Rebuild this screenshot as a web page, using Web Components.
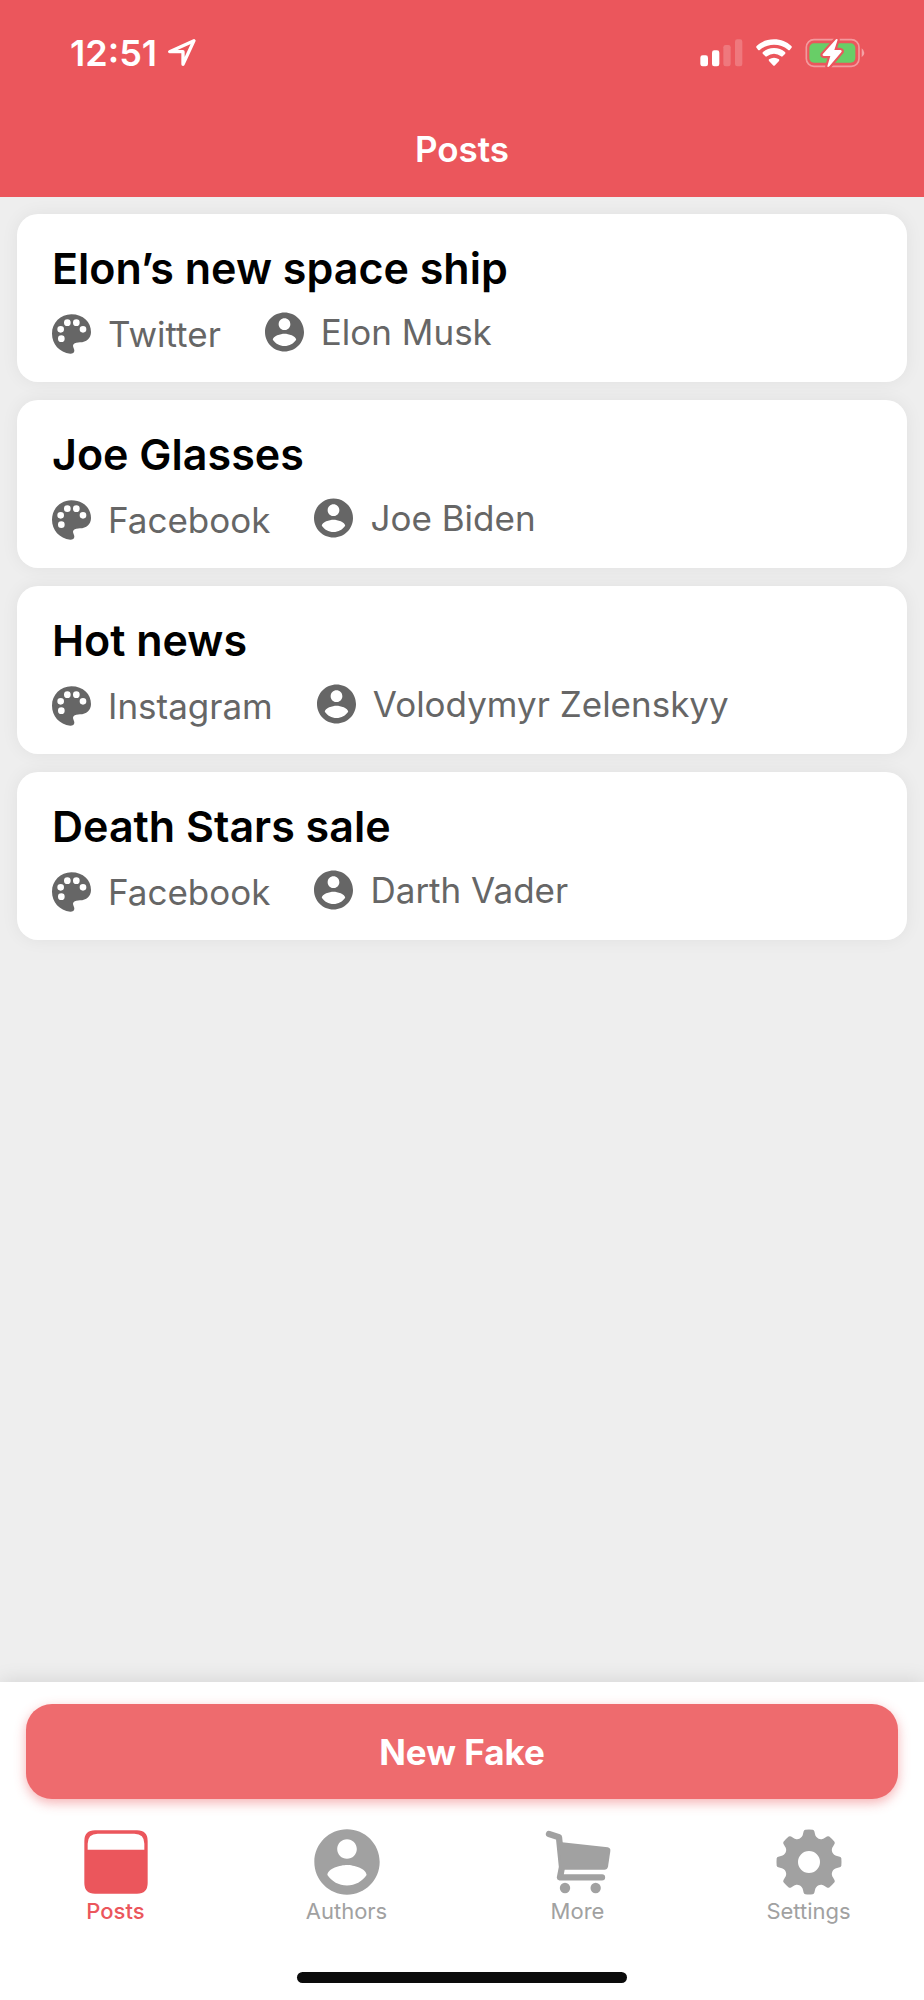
<!DOCTYPE html>
<html lang="en">
<head>
<meta charset="utf-8">
<meta name="viewport" content="width=device-width, initial-scale=1">
<title>Posts</title>
<style>
  body {
    margin: 0;
    font-family: Inter, "Liberation Sans", sans-serif;
    background: #eee;
    --accent: #eb565c;
    --accent-soft: #ee6b6e;
    --muted: #666;
    --idle: #a1a1a1;
  }
</style>
</head>
<body>
<fake-app>
  <status-bar slot="header" time="12:51"></status-bar>
  <nav-title slot="header">Posts</nav-title>
  <post-card network="Twitter" author="Elon Musk">Elon’s new space ship</post-card>
  <post-card network="Facebook" author="Joe Biden">Joe Glasses</post-card>
  <post-card network="Instagram" author="Volodymyr Zelenskyy">Hot news</post-card>
  <post-card network="Facebook" author="Darth Vader">Death Stars sale</post-card>
  <action-button slot="footer">New Fake</action-button>
  <tab-bar slot="footer">
    <tab-item icon="posts" href="#posts" active>Posts</tab-item>
    <tab-item icon="person" href="#authors">Authors</tab-item>
    <tab-item icon="cart" href="#more">More</tab-item>
    <tab-item icon="gear" href="#settings">Settings</tab-item>
  </tab-bar>
</fake-app>

<script>
// One tooth and the valley after it, repeated every 45 degrees around the hub.
function gearPath() {
  const at = (x, y, k) => {
    const a = k * Math.PI / 4, c = Math.cos(a), s = Math.sin(a);
    return (99 + x * c - y * s).toFixed(1) + ' ' + (99 + x * s + y * c).toFixed(1);
  };
  let d = '';
  for (let k = 0; k < 8; k++) {
    d += (k ? 'L' : 'M') + at(-16, -92, k) + 'Q' + at(-15, -96, k) + ' ' + at(-11, -97, k) +
      'Q' + at(0, -98, k) + ' ' + at(11, -97, k) + 'Q' + at(15, -96, k) + ' ' + at(16, -92, k) +
      'L' + at(18, -84, k) + 'A18 18 0 0 0 ' + at(-18, -84, k + 1);
  }
  return d + 'ZM66 99a33 33 0 1 0 66 0a33 33 0 1 0 -66 0Z';
}

const PERSON = '<path d="M12 2C6.48 2 2 6.48 2 12s4.48 10 10 10 10-4.48 10-10S17.52 2 12 2zm0 3c1.66 0 3 1.34 3 3s-1.34 3-3 3-3-1.34-3-3 1.34-3 3-3zm0 14.2c-2.5 0-4.71-1.28-6-3.22.03-1.99 4-3.08 6-3.08 1.99 0 5.97 1.09 6 3.08-1.29 1.94-3.5 3.22-6 3.22z"/>';

const TAB_ICONS = {
  posts: '<svg viewBox="0 0 198 198"><path fill-rule="evenodd" d="M36 4H162Q194 4 194 36V162Q194 194 162 194H36Q4 194 4 162V36Q4 4 36 4ZM44 14Q14 14 14 44V62H184V44Q184 14 154 14Z"/></svg>',
  person: '<svg viewBox="1.9 1.9 20.2 20.2">' + PERSON + '</svg>',
  cart: '<svg viewBox="246 506 198 198"><path fill="none" stroke="currentColor" stroke-width="19" stroke-linecap="round" stroke-linejoin="round" d="M258 521L288 531L297 620L291 651H417"/><path d="M290 545L434 561Q443 563 442 572L435 619Q433 628 424 628H296Z"/><circle cx="306" cy="683" r="15.5"/><circle cx="398" cy="683" r="15.5"/></svg>',
  gear: '<svg viewBox="0 0 198 198"><path fill-rule="evenodd" d="' + gearPath() + '"/></svg>'
};

class Component extends HTMLElement {
  connectedCallback() {
    if (this.shadowRoot) return;
    this.attachShadow({ mode: 'open' }).innerHTML = this.render();
  }
  attr(name) { return this.getAttribute(name) || ''; }
}

customElements.define('fake-app', class extends Component {
  render() {
    return `<style>
      :host { display: flex; flex-direction: column; min-height: 100vh; }
      header { background: var(--accent); color: #fff; }
      main { flex: 1; display: flex; flex-direction: column; gap: 18px; padding: 17px; }
      footer { background: #fff; padding-top: 22px; box-shadow: 0 0 20px rgba(0,0,0,.12); }
    </style>
    <header><slot name="header"></slot></header>
    <main><slot></slot></main>
    <footer><slot name="footer"></slot></footer>`;
  }
});

customElements.define('status-bar', class extends Component {
  render() {
    return `<style>
      :host { display: flex; justify-content: space-between; align-items: center; height: 106px; padding: 0 59px 0 70px; }
      div { display: flex; align-items: center; gap: 13px; }
      .clock { gap: 10px; }
      time { font-size: 36px; line-height: 44px; font-weight: 600; }
      svg { display: block; }
    </style>
    <div class="clock">
      <time>${this.attr('time')}</time>
      <svg width="30" height="30" viewBox="0 0 90 90" fill="none" stroke="#fff" stroke-width="10" stroke-linejoin="round"><path d="M81 8L8 41H48V79Z"/></svg>
    </div>
    <div>
      <svg width="43" height="28" viewBox="0 0 129 84" fill="#fff">
        <rect x="1" y="49" width="23" height="33" rx="7"/><rect x="36" y="34" width="22" height="48" rx="7"/>
        <g opacity=".2"><rect x="70" y="18" width="22" height="64" rx="7"/><rect x="105" y="1" width="22" height="81" rx="7"/></g>
      </svg>
      <svg width="36" height="28" viewBox="0 0 108 84" fill="#fff">
        <path d="M54 1C75 1 92 8 106 21Q109 24 106 27L102 32Q99 35 96 32Q78 17 54 17T12 32Q9 35 6 32L2 27Q-1 24 2 21C16 8 33 1 54 1Z"/>
        <path d="M54 27Q73 27 87 39Q90 42 87 45L80 52Q78 54 75 52Q66 44 54 44T33 52Q30 54 28 52L21 45Q18 42 21 39Q35 27 54 27Z"/>
        <path d="M54 56Q62 56 69 61Q71 63 69 66L57 79Q54 82 51 79L39 66Q37 63 39 61Q46 56 54 56Z"/>
      </svg>
      <svg width="60" height="30" viewBox="0 0 180 90">
        <rect x="4" y="5" width="158" height="80" rx="23" fill="none" stroke="#fff" stroke-opacity=".4" stroke-width="5"/>
        <path d="M170 31Q178 37 178 45T170 58Z" fill="#fff" fill-opacity=".45"/>
        <rect x="13" y="16" width="138" height="58" rx="14" fill="#68ce67"/>
        <path d="M93 4L53 49Q51 53 56 54H76L67 85Q68 89 73 85L110 41Q111 37 106 36H88L98 5Q97 1 93 4Z" fill="#fff" stroke="#eb565c" stroke-width="13" stroke-linejoin="round" paint-order="stroke"/>
      </svg>
    </div>`;
  }
});

customElements.define('nav-title', class extends Component {
  render() {
    return `<style>
      :host { display: block; padding: 21px 0 26px; text-align: center; }
      h1 { margin: 0; font-size: 35px; line-height: 44px; font-weight: 600; }
    </style><h1><slot></slot></h1>`;
  }
});

customElements.define('post-card', class extends Component {
  render() {
    return `<style>
      :host { display: block; padding: 26px 35px 24px; border-radius: 21px; background: #fff; box-shadow: 0 0 18px rgba(0,0,0,.06); }
      h2 { margin: 0 0 16px; font-size: 43px; line-height: 56px; font-weight: 600; color: #000; }
      div { display: flex; align-items: flex-start; gap: 44px; height: 46px; color: var(--muted); font-size: 35px; line-height: 40px; }
      span { display: flex; align-items: center; gap: 17px; }
      svg { display: block; fill: currentColor; }
    </style>
    <h2><slot></slot></h2>
    <div>
      <span><svg width="39" height="44" viewBox="0 -7 117 132"><path fill-rule="evenodd" d="M58 0C94 0 117 24 117 53C117 72 103 84 84 84L73 85C66 86 63 90 63 95C64 101 67 104 67 109C67 115 62 118 55 118C22 115 0 88 0 58C0 25 26 0 58 0ZM16 45a10 10 0 1 0 20 0a10 10 0 1 0-20 0ZM36 25a10 10 0 1 0 20 0a10 10 0 1 0-20 0ZM63 25a10 10 0 1 0 20 0a10 10 0 1 0-20 0ZM83 45a10 10 0 1 0 20 0a10 10 0 1 0-20 0ZM18 73a10 10 0 1 0 20 0a10 10 0 1 0-20 0Z"/></svg>${this.attr('network')}</span>
      <span><svg width="39" height="40" viewBox="2 2 20 20">${PERSON}</svg>${this.attr('author')}</span>
    </div>`;
  }
});

customElements.define('action-button', class extends Component {
  render() {
    return `<style>
      :host { display: block; padding: 0 26px; }
      button { display: block; width: 100%; height: 95px; border: 0; border-radius: 26px; background: var(--accent-soft); color: #fff; font: 700 35px/44px Inter, "Liberation Sans", sans-serif; box-shadow: 0 4px 12px rgba(235,86,92,.45); }
    </style><button type="button"><slot></slot></button>`;
  }
});

customElements.define('tab-bar', class extends Component {
  render() {
    return `<style>
      :host { display: block; padding: 30px 0 17px; }
      nav { display: grid; grid-template-columns: repeat(4, 1fr); }
      hr { width: 330px; height: 11px; margin: 48px auto 0; border: 0; border-radius: 6px; background: #0b0b0b; }
    </style><nav><slot></slot></nav><hr>`;
  }
});

customElements.define('tab-item', class extends Component {
  render() {
    return `<style>
      :host { display: block; color: var(--idle); }
      :host([active]) { color: var(--accent); font-weight: 500; }
      a { display: flex; flex-direction: column; align-items: center; gap: 3px; color: inherit; text-decoration: none; font-size: 22px; line-height: 26px; }
      svg { display: block; width: 66px; height: 66px; fill: currentColor; }
    </style><a href="${this.attr('href')}">${TAB_ICONS[this.attr('icon')]}<span><slot></slot></span></a>`;
  }
});
</script>
</body>
</html>
